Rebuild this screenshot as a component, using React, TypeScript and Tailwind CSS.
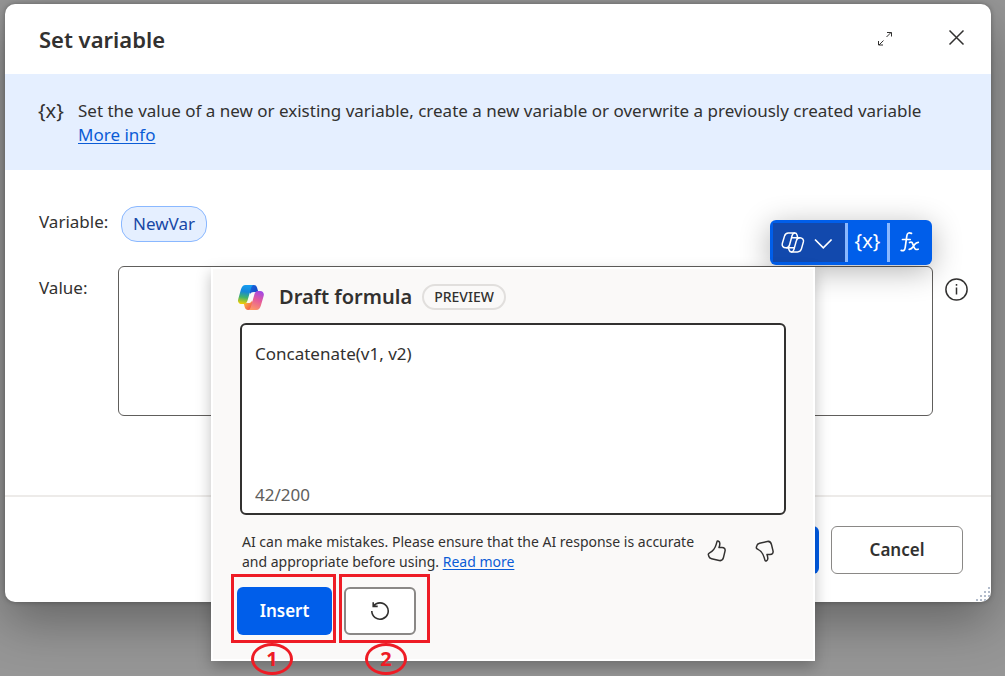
import React from "react";

function CopilotColor() {
  return (
    <svg aria-hidden="true" viewBox="0 0 28 27" className="h-[27px] w-7 shrink-0">
      <defs>
        <linearGradient id="cpLeft" x1="9" y1="1" x2="6" y2="20" gradientUnits="userSpaceOnUse">
          <stop offset="0" stopColor="#159df0" />
          <stop offset="0.35" stopColor="#1687d8" />
          <stop offset="0.65" stopColor="#42b36b" />
          <stop offset="1" stopColor="#f5d000" />
        </linearGradient>
        <linearGradient id="cpRight" x1="23" y1="7" x2="15" y2="26" gradientUnits="userSpaceOnUse">
          <stop offset="0" stopColor="#a047e8" />
          <stop offset="0.45" stopColor="#e45a9c" />
          <stop offset="1" stopColor="#ff9a62" />
        </linearGradient>
        <linearGradient id="cpTop" x1="13" y1="2" x2="21" y2="7" gradientUnits="userSpaceOnUse">
          <stop offset="0" stopColor="#1769e0" />
          <stop offset="1" stopColor="#1546c2" />
        </linearGradient>
        <linearGradient id="cpBottom" x1="7" y1="20" x2="14" y2="26" gradientUnits="userSpaceOnUse">
          <stop offset="0" stopColor="#ffb13b" />
          <stop offset="1" stopColor="#ef4d55" />
        </linearGradient>
      </defs>
      <path fill="url(#cpTop)" d="M12 1h4.800c1.900 0 2.800 1.200 3.300 2.800L21.300 8h-3.200c-2 0-3 1.100-3.600 3L12 8Z" />
      <path fill="url(#cpBottom)" d="M16 26h-4.900c-2 0-2.900-1.200-3.400-2.900L6.600 19H10c2.100 0 3-1.300 3.600-3.200L17 19Z" />
      <path fill="url(#cpLeft)" d="M8.600 1h8.200c-1.500.2-2.100 1.300-2.600 2.800l-3.600 12.500C9.900 18.600 9 20 6.800 20H4.700c-2.700 0-4.300-2.200-3.500-4.800L3.900 5.600C4.700 2.900 6 1 8.600 1Z" />
      <path fill="url(#cpRight)" d="M19.300 26h-8.200c1.600-.2 2.200-1.300 2.700-2.900l3.500-12.400C18 8.400 18.800 7 21 7h2.200c2.600 0 4.200 2.200 3.500 4.700l-2.800 9.700c-.8 2.700-1.900 4.600-4.600 4.600Z" />
      <path fill="#faf9f8" d="M17.700 8.200c-.5.500-.7 1.200-1 2.100l-1.800 6.300c-.4 1.500-1.100 2.200-2.400 2.300h-2.300c.6-.5.900-1.300 1.200-2.200l1.800-6.300c.4-1.500 1-2.200 2.400-2.200Z" />
    </svg>
  );
}

function CopilotOutline() {
  return (
    <svg aria-hidden="true" viewBox="0 0 24 22" className="h-[22px] w-6" fill="none" stroke="currentColor" strokeWidth="1.500" strokeLinejoin="round" strokeLinecap="round">
      <path d="M7.300 1h6.400c1.300 0 2 .8 2.300 1.900l.7 2.800h2.200c2.500 0 4.100 1.900 3.500 4.200l-2 7c-.6 2-1.900 3-3.900 3h-6c-1.400 0-2-.8-2.400-2l-.7-2.200H4.700c-2.600 0-4-1.900-3.400-4.200l2.200-7.400C4.100 2 5.400 1 7.300 1Z" />
      <path d="M13.700 1c-1.400 0-2.100.9-2.500 2.300L8.600 12.700c-.4 1.600-1.300 3-3 3M10.500 19.900c1.400 0 2-.9 2.400-2.300l2.400-8.700c.4-1.600 1.600-3.200 3.500-3.200M10.800 5.700h6M6.400 15.700h6.400" />
    </svg>
  );
}

function Thumb({ down = false }: { down?: boolean }) {
  return (
    <svg aria-hidden="true" viewBox="0 0 20 22" className={down ? "h-[22px] w-5 -scale-y-100" : "h-[22px] w-5"} fill="none" stroke="currentColor" strokeWidth="1.500" strokeLinejoin="round">
      <path d="M10 1.600c.4-1.300 2.700-.3 2.800 1.700.1 1.500-.3 3-.8 4.300h3c2.400 0 3.500 1.400 3 3.500l-1.500 6.300c-.6 2.600-2 3.600-4.300 3.100l-7.600-1.700c-1.700-.4-2.300-.8-2.700-2.300l-.5-1.600c-.3-1 .2-1.600 1.200-2.100C7 10.700 8.200 8 9.200 4.400Z" />
    </svg>
  );
}

function Marker({ value }: { value: string }) {
  return (
    <span className="flex h-8 w-[42px] items-center justify-center rounded-[50%] border-3 border-[#ee1c25] text-xl leading-none font-bold text-[#ee1c25]">
      {value}
    </span>
  );
}

function DraftPanel() {
  return (
    <section aria-label="Draft formula" className="absolute top-px left-[93px] z-10 w-[604px] border-2 border-white bg-[#faf9f8] px-6 pt-2.5 pb-6 shadow-[0_6px_14px_rgba(0,0,0,0.25)]">
      <div className="flex items-center">
        <CopilotColor />
        <h2 className="ml-3.5 text-xl leading-9 font-semibold text-[#323130]">Draft formula</h2>
        <span className="ml-2.5 rounded-full border-2 border-[#e1dfdd] px-2.5 text-sm leading-[22px] font-medium">PREVIEW</span>
      </div>
      <div className="mt-2 mr-[3px] ml-[3px] flex h-48 flex-col rounded-md border-2 border-[#323130] bg-white px-[13px] pt-[15px] pb-1.5">
        <textarea aria-label="Formula prompt" defaultValue="Concatenate(v1, v2)" className="w-full flex-1 resize-none bg-transparent text-[17px] leading-7 outline-none" />
        <span className="text-[17px] leading-6 text-[#605e5c]">42/200</span>
      </div>
      <div className="mt-[17px] flex items-start pl-[5px]">
        <p className="w-[460px] text-sm leading-5">
          AI can make mistakes. Please ensure that the AI response is accurate and appropriate before using.{" "}
          <a href="#read" className="inline-block text-[#0b5cd6] underline underline-offset-2">Read more</a>
        </p>
        <button aria-label="Like" className="mt-2 ml-[5px]"><Thumb /></button>
        <button aria-label="Dislike" className="mt-2 ml-7"><Thumb down /></button>
      </div>
      <div className="mt-[15px] flex gap-3">
        <div className="relative">
          <button className="h-12 w-[95px] rounded-md bg-[#005eea] text-[17px] font-semibold text-white">Insert</button>
          <div className="pointer-events-none absolute -top-[13px] -left-1.5 h-[69px] w-[105px] border-3 border-[#ee1c25]" />
          <div className="pointer-events-none absolute top-14 left-3.5"><Marker value="1" /></div>
        </div>
        <div className="relative">
          <button aria-label="Regenerate" className="flex h-12 w-[72px] items-center justify-center rounded-md border-2 border-[#8a8886] bg-white">
            <svg aria-hidden="true" viewBox="0 0 20 20" className="size-5" fill="none" stroke="currentColor" strokeWidth="1.600">
              <path d="M3.400 5.200A8.200 8.200 0 1 1 1.800 10M3.200 1.200v4.200h4.500" />
            </svg>
          </button>
          <div className="pointer-events-none absolute -top-[13px] -left-[5px] h-[69px] w-[91px] border-3 border-[#ee1c25]" />
          <div className="pointer-events-none absolute top-14 left-[21px]"><Marker value="2" /></div>
        </div>
      </div>
    </section>
  );
}

const gripDots = [[14, 2], [10, 6], [14, 6], [6, 10], [10, 10], [14, 10], [2, 14], [6, 14], [10, 14]];

export default function App() {
  return (
    <div className="min-h-screen overflow-hidden bg-[#969696] pt-1 pr-3.5 pl-[5px] font-['Noto_Sans',sans-serif] text-[#323130]">
      <main role="dialog" aria-labelledby="dialog-title" className="relative rounded-[10px] bg-white shadow-[0_20px_50px_rgba(0,0,0,0.320),0_0_5px_rgba(0,0,0,0.3)]">
        <header className="flex h-[70px] items-center pr-6 pl-[34px]">
          <h1 id="dialog-title" className="flex-1 text-[22px] font-semibold">Set variable</h1>
          <button aria-label="Expand" className="mr-[54px]">
            <svg aria-hidden="true" viewBox="0 0 16 16" className="size-4" fill="none" stroke="currentColor">
              <path d="M9.500 6l4.500-4.500M10 1.500h4.500V5.500M6.500 9.500l-4.500 4.500M1.500 10v4h4.500" />
            </svg>
          </button>
          <button aria-label="Close">
            <svg aria-hidden="true" viewBox="0 0 20 20" className="size-5" fill="none" stroke="currentColor" strokeWidth="1.500">
              <path d="M2.500 1.500l14 14M16.500 1.500l-14 14" />
            </svg>
          </button>
        </header>
        <div className="flex h-24 gap-3.5 bg-[#e5efff] px-[33px] pt-[25px] text-[17px] leading-6">
          <span className="w-[26px] text-xl leading-6">{"{x}"}</span>
          <p>
            Set the value of a new or existing variable, create a new variable or overwrite a previously created variable
            <br />
            <a href="#info" className="text-[#0b5cd6] underline underline-offset-2">More info</a>
          </p>
        </div>
        <div className="px-[34px] pt-9 pr-[23px] pb-[79px] text-[17px]">
          <div className="flex h-[60px] items-start">
            <span className="w-[82px] leading-8">Variable:</span>
            <button className="h-9 rounded-2xl border border-[#8ab8ff] bg-[#e5efff] px-[11px] text-[#1747a6]">NewVar</button>
          </div>
          <div className="flex items-start">
            <label htmlFor="value" className="w-[79px] pt-1.5 leading-8">Value:</label>
            <div className="relative flex-1">
              <textarea id="value" className="block h-[150px] w-full resize-none rounded-md border border-[#605e5c] outline-none" />
              <div className="absolute right-px bottom-full mb-px flex h-[45px] w-[162px] rounded-md bg-[#005eea] p-[3px] text-white shadow-[0_6px_30px_rgba(0,0,0,0.3)]">
                <button aria-label="Copilot" className="flex w-[72px] items-center gap-2 bg-[#1249ad] pl-2">
                  <CopilotOutline />
                  <svg aria-hidden="true" viewBox="0 0 20 20" className="size-5" fill="none" stroke="currentColor" strokeWidth="1.700">
                    <path d="M2 6.500l8.300 8.300 8.300-8.300" />
                  </svg>
                </button>
                <button aria-label="Insert variable" className="w-[42px] border-l-3 border-[#8ab8ff] pb-1 text-xl leading-8">{"{x}"}</button>
                <button aria-label="Insert function" className="flex w-[42px] items-center justify-center border-l-3 border-[#8ab8ff] pb-0.5">
                  <svg aria-hidden="true" viewBox="0 0 20 22" className="h-[22px] w-5" fill="none" stroke="currentColor" strokeWidth="1.700" strokeLinecap="round" strokeLinejoin="round">
                    <path d="M11.500 2.400C8.800 1.200 7.200 2 6.800 5L5.200 16.500c-.4 2.700-1.600 3.700-4 2.900M2.500 8.500h7.700M9.500 11.500c1.900-.8 2.700-.2 3.400 1.700l1.200 3.100c.7 2 1.900 2.700 4 1.900M18.300 11.300c-1.700 0-2.600.7-3.700 2.300l-1.700 2.500c-1 1.500-1.900 2.200-3.700 2.200" />
                  </svg>
                </button>
              </div>
              <DraftPanel />
            </div>
            <button aria-label="Information" className="mt-3 ml-3">
              <svg aria-hidden="true" viewBox="0 0 23 23" className="size-[23px]" fill="none" stroke="currentColor" strokeWidth="1.500">
                <circle cx="11.500" cy="11.500" r="10.600" />
                <path d="M11.500 9.500v7M11.500 6v1.800" />
              </svg>
            </button>
          </div>
        </div>
        <footer className="relative flex h-[107px] justify-end gap-3 border-t-2 border-[#edebe9] pt-[29px] pr-7">
          <button aria-label="Save" className="h-12 w-[132px] rounded-md bg-[#005eea]" />
          <button className="h-12 w-[132px] rounded-md border border-[#8a8886] text-[17px] font-semibold">Cancel</button>
          <svg aria-hidden="true" viewBox="0 0 16 16" className="absolute right-0 bottom-0 size-4 text-[#b3bccb]" fill="currentColor">
            {gripDots.map(([x, y]) => <rect key={`${x}-${y}`} x={x - 1} y={y - 1} width="2" height="2" />)}
          </svg>
        </footer>
      </main>
    </div>
  );
}
